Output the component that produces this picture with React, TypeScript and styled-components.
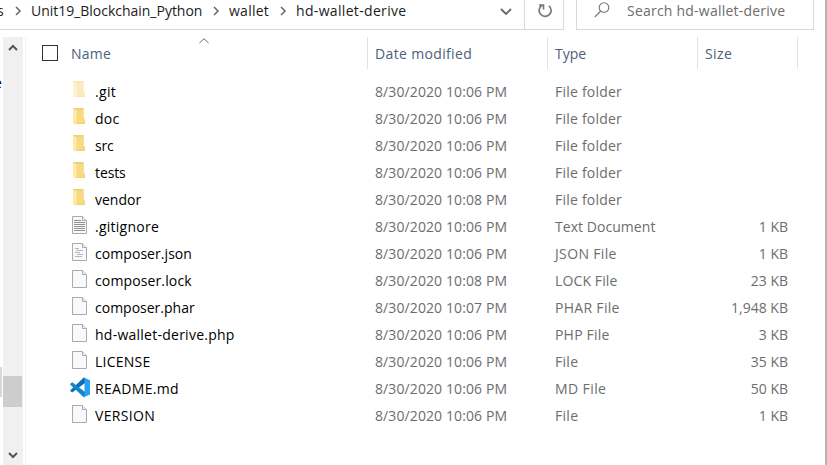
import React from "react";
import styled, { createGlobalStyle } from "styled-components";

const GlobalStyle = createGlobalStyle`
  * { box-sizing: border-box; }
  body { margin: 0; background: #fff; overflow: hidden; }
`;

const Window = styled.div`
  width: 827px;
  height: 465px;
  display: flex;
  flex-direction: column;
  background: #fff;
  border-right: 2px solid #b4b4b4;
  font: 14px/20px "Open Sans", "Noto Sans", sans-serif;
  color: #000;
  overflow: hidden;
  white-space: nowrap;
  svg { display: block; flex: none; }
`;

const TopBar = styled.header`
  height: 30px;
  display: flex;
  gap: 12px;
  flex: none;
`;

const AddressBar = styled.nav`
  width: 564px;
  display: flex;
  border: solid #d9d9d9;
  border-width: 0 1px 1px 0;
`;

const Crumbs = styled.div`
  width: 524px;
  height: 22px;
  display: flex;
  align-items: center;
  overflow: hidden;
`;

const Crumb = styled.span<{ $width: number; $spacing?: number; $shift?: number }>`
  width: ${(p) => p.$width}px;
  flex: none;
  letter-spacing: ${(p) => p.$spacing ?? 0}px;
  text-indent: ${(p) => p.$shift ?? 0}px;
  color: #1c1c1c;
`;

const CrumbArrow = styled.span`
  width: 24px;
  flex: none;
  padding-left: 8px;
`;

const Dropdown = styled.span`
  margin: 2px 12px 0 auto;
`;

const Refresh = styled.div`
  flex: 1;
  border-left: 1px solid #d9d9d9;
  padding: 3px 0 0 12px;
`;

const SearchBox = styled.div`
  width: 238px;
  display: flex;
  border: solid #d9d9d9;
  border-width: 0 1px 1px;
  padding: 1px 0 0 17px;
  gap: 17px;
  color: #6d6d6d;
  letter-spacing: 0.22px;
`;

const Body = styled.main`
  flex: 1;
  display: flex;
  min-height: 0;
  padding-top: 7px;
`;

const TreeEdge = styled.aside`
  width: 3px;
  flex: none;
  display: flex;
  flex-direction: column;
  overflow: hidden;
`;

const TreeText = styled.span`
  height: 20px;
  margin: 36px 0 274px;
  text-indent: -6px;
`;

const TreeSelection = styled.div`
  width: 2px;
  height: 30px;
  background: #d9d9d9;
`;

const Scrollbar = styled.div`
  width: 20px;
  flex: none;
  display: flex;
  flex-direction: column;
  align-items: center;
  background: #f0f0f0;
  padding: 6px 0 5px;
`;

const Thumb = styled.div`
  width: 19px;
  height: 31px;
  margin: 324px 1px auto 0;
  background: #cdcdcd;
`;

const Listing = styled.section`
  flex: 1;
  margin-left: 2px;
  border-left: 1px solid #f3f3f3;
`;

const HeaderRow = styled.div`
  height: 32px;
  display: grid;
  grid-template-columns: 342px 180px 150px 100px;
  color: #4c607a;
`;

const HeaderCell = styled.div<{ $spacing?: number }>`
  display: flex;
  align-items: center;
  border-right: 1px solid #e2e2e2;
  padding: 2px 0 0 7px;
  letter-spacing: ${(p) => p.$spacing ?? 0}px;
`;

const NameHeader = styled(HeaderCell)`
  padding-left: 16px;
  gap: 13px;
`;

const Checkbox = styled.span`
  width: 16px;
  height: 16px;
  border: 1px solid #333;
  margin-top: -2px;
`;

const SortMark = styled.span`
  align-self: flex-start;
  margin: -1px 0 0 75px;
`;

const Rows = styled.div`
  padding-top: 9px;
`;

const Row = styled.div`
  height: 27px;
  display: grid;
  grid-template-columns: 25px 280px 180px 130px 103px;
  margin-left: 44px;
  line-height: 27px;
  color: #6d6d6d;
`;

const IconCell = styled.span<{ $faded?: boolean }>`
  padding-top: 2px;
  opacity: ${(p) => (p.$faded ? 0.5 : 1)};
`;

const Cell = styled.span<{ $spacing?: number }>`
  letter-spacing: ${(p) => p.$spacing ?? 0}px;
`;

const FileName = styled(Cell)`
  color: #000;
`;

const SizeCell = styled(Cell)`
  text-align: right;
`;

type Kind = "folder" | "text" | "json" | "file" | "code";

const Arrow = ({ d, w, h, color = "#666", weight = 1.5 }: { d: string; w: number; h: number; color?: string; weight?: number }) => (
  <svg width={w} height={h} fill="none" stroke={color} strokeWidth={weight}>
    <path d={d} />
  </svg>
);

const FolderIcon = () => (
  <svg width="20" height="21" viewBox="0 0 20 21">
    <path d="M3 1h10.5v11.5H15V17H5z" fill="#f3cf70" />
    <path d="M6 3h7.5v9.5h1V16H6z" fill="#f8da80" />
    <path d="M3 1.3 6.5 3.5V18L3 16.5z" fill="#ffe9a8" />
    <path d="M3.5 1.5h10" stroke="#efcf7c" />
  </svg>
);

const PageIcon = ({ kind }: { kind: Kind }) => (
  <svg width="20" height="21" viewBox="0 0 20 21" fill="none">
    <path d="M2.5 1.5h10l4 4v13h-14z" fill="#f8f9fa" stroke="#ababab" />
    <path d="M12.5 1.5v4h4" fill="#ededed" stroke="#ababab" />
    {kind === "text" && <path d="M4 5.5h7M4 7.5h11M4 9.5h11M4 11.5h11M4 13.5h11M4 15.5h11" stroke="#8f8f8f" />}
    {kind === "json" && <path d="M5 6.5h4M6 8.5h7M5 10.5h5M7 12.5h6M5 14.5h7" stroke="#b5b8ba" />}
  </svg>
);

const CodeIcon = () => (
  <svg width="20" height="21" viewBox="0 0 20 21">
    <path d="M.3 13.2 13.8.5 15 1v5L2.2 15.5.3 14z" fill="#0a6fb5" />
    <path d="M.3 6.8 2.2 5.2 15 15v4.8l-1.2.4L.3 7.8z" fill="#1086cc" />
    <path d="M13.8.5 20 3.2v14.3l-6.2 2.7.7-1.2V1.8z" fill="#27a3ed" />
  </svg>
);

const FileIcon = ({ kind }: { kind: Kind }) =>
  kind === "folder" ? <FolderIcon /> : kind === "code" ? <CodeIcon /> : <PageIcon kind={kind} />;

interface Entry {
  kind: Kind;
  name: string;
  minute: string;
  type: string;
  size?: string;
  faded?: boolean;
  spacing?: number;
  typeSpacing?: number;
}

const entries: Entry[] = [
  { kind: "folder", name: ".git", minute: "06", type: "File folder", faded: true, spacing: 0.35, typeSpacing: 0.22 },
  { kind: "folder", name: "doc", minute: "06", type: "File folder", spacing: 0.3, typeSpacing: 0.22 },
  { kind: "folder", name: "src", minute: "06", type: "File folder", spacing: -0.2, typeSpacing: 0.22 },
  { kind: "folder", name: "tests", minute: "06", type: "File folder", spacing: -0.1, typeSpacing: 0.22 },
  { kind: "folder", name: "vendor", minute: "08", type: "File folder", typeSpacing: 0.22 },
  { kind: "text", name: ".gitignore", minute: "06", type: "Text Document", size: "1 KB", spacing: 0.25, typeSpacing: 0.05 },
  { kind: "json", name: "composer.json", minute: "06", type: "JSON File", size: "1 KB", spacing: 0.06, typeSpacing: 0.35 },
  { kind: "file", name: "composer.lock", minute: "08", type: "LOCK File", size: "23 KB", spacing: 0.13, typeSpacing: 0.12 },
  { kind: "file", name: "composer.phar", minute: "07", type: "PHAR File", size: "1,948 KB", typeSpacing: 0.3 },
  { kind: "file", name: "hd-wallet-derive.php", minute: "06", type: "PHP File", size: "3 KB", spacing: 0.25, typeSpacing: 0.2 },
  { kind: "file", name: "LICENSE", minute: "06", type: "File", size: "35 KB", spacing: 0.25, typeSpacing: 0.3 },
  { kind: "code", name: "README.md", minute: "06", type: "MD File", size: "50 KB", spacing: 0.33, typeSpacing: 0.4 },
  { kind: "file", name: "VERSION", minute: "06", type: "File", size: "1 KB", spacing: 0.33, typeSpacing: 0.3 },
];

const CrumbChevron = () => (
  <CrumbArrow>
    <Arrow w={8} h={10} d="M1 1 5 5 1 9" />
  </CrumbArrow>
);

export default function App() {
  return (
    <>
      <GlobalStyle />
      <Window>
        <TopBar>
          <AddressBar>
            <Crumbs>
              <Crumb $width={7} $shift={-3}>s</Crumb>
              <CrumbChevron />
              <Crumb $width={174} $spacing={-0.02}>Unit19_Blockchain_Python</Crumb>
              <CrumbChevron />
              <Crumb $width={43} $spacing={0.25}>wallet</Crumb>
              <CrumbChevron />
              <Crumb $width={115} $spacing={0.33}>hd-wallet-derive</Crumb>
              <Dropdown>
                <Arrow w={12} h={8} d="M1 1 6 6 11 1" weight={1.8} />
              </Dropdown>
            </Crumbs>
            <Refresh>
              <svg width="18" height="17" fill="none" stroke="#777" strokeWidth="1.7">
                <path d="M5 2.3A6 6 0 1 0 12 2.8M2 2h4.5v4.5" />
              </svg>
            </Refresh>
          </AddressBar>
          <SearchBox>
            <svg width="16" height="18" fill="none" stroke="#777" strokeWidth="1.1">
              <circle cx="10" cy="6.5" r="4.8" />
              <path d="M6.7 10 .8 16" />
            </svg>
            Search hd-wallet-derive
          </SearchBox>
        </TopBar>
        <Body>
          <TreeEdge>
            <TreeText>e</TreeText>
            <TreeSelection />
          </TreeEdge>
          <Scrollbar>
            <Arrow w={10} h={9} d="M1 7 5 3 9 7" color="#555" weight={2} />
            <Thumb />
            <Arrow w={10} h={9} d="M1 2 5 6 9 2" color="#555" weight={2} />
          </Scrollbar>
          <Listing>
            <HeaderRow>
              <NameHeader $spacing={0.2}>
                <Checkbox />
                Name
                <SortMark>
                  <Arrow w={10} h={6} d="M.5 5 5 .7 9.5 5" weight={1} />
                </SortMark>
              </NameHeader>
              <HeaderCell $spacing={0.35}>Date modified</HeaderCell>
              <HeaderCell>Type</HeaderCell>
              <HeaderCell $spacing={0.4}>Size</HeaderCell>
            </HeaderRow>
            <Rows>
              {entries.map((e) => (
                <Row key={e.name}>
                  <IconCell $faded={e.faded}>
                    <FileIcon kind={e.kind} />
                  </IconCell>
                  <FileName $spacing={e.spacing}>{e.name}</FileName>
                  <Cell $spacing={0.1}>8/30/2020 10:{e.minute} PM</Cell>
                  <Cell $spacing={e.typeSpacing}>{e.type}</Cell>
                  <SizeCell>{e.size}</SizeCell>
                </Row>
              ))}
            </Rows>
          </Listing>
        </Body>
      </Window>
    </>
  );
}
